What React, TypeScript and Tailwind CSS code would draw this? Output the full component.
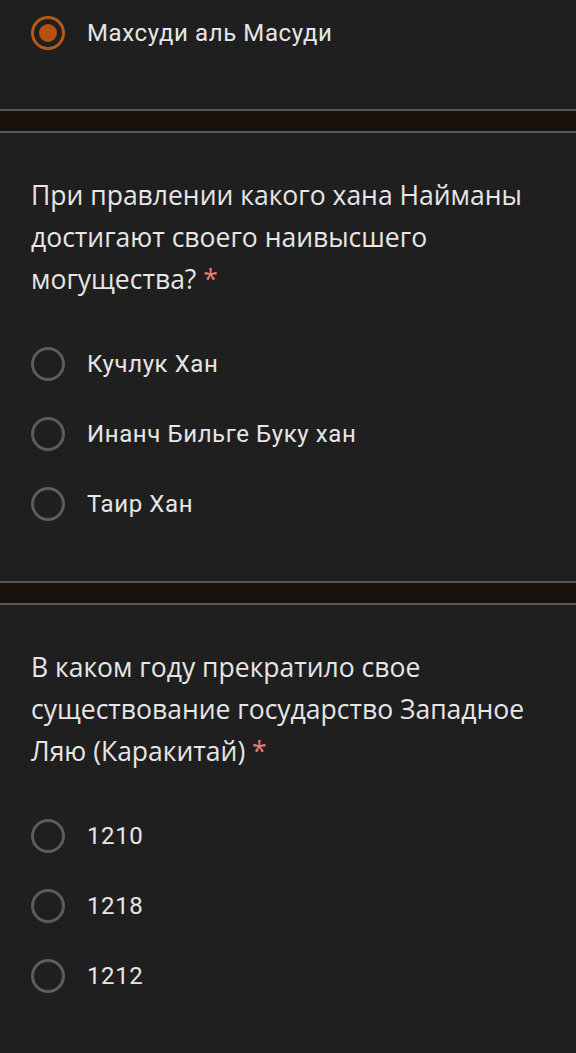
const questions = [
  {
    title: 'При правлении какого хана Найманы достигают своего наивысшего могущества?',
    options: ['Кучлук Хан', 'Инанч Бильге Буку хан', 'Таир Хан'],
  },
  {
    title: 'В каком году прекратило свое существование государство Западное Ляю (Каракитай)',
    options: ['1210', '1218', '1212'],
  },
]

function Radio({ checked }: { checked?: boolean }) {
  if (checked) {
    return (
      <span className="flex h-[34px] w-[34px] items-center justify-center rounded-full border-[3px] border-[#b3591a]">
        <span className="h-[18px] w-[18px] rounded-full bg-[#b5520f]" />
      </span>
    )
  }
  return <span className="h-[34px] w-[34px] rounded-full border-[3px] border-[#5c5c5c]" />
}

function Option({ label, checked }: { label: string; checked?: boolean }) {
  return (
    <div className="flex h-[70px] items-center gap-[22px] pl-[31px]">
      <Radio checked={checked} />
      <span className="text-[24px] tracking-[0.6px] text-[#e6e6e6]">{label}</span>
    </div>
  )
}

function Divider() {
  return <div className="h-[24px] border-y-2 border-[#5b5754] bg-[#19110c]" />
}

export default function App() {
  return (
    <div className="min-h-[1053px] bg-[#1f1f1f] font-['Roboto',sans-serif]">
      {/* previous question, already answered */}
      <div className="-mt-[2px] pb-[41px]">
        <Option label="Махсуди аль Масуди" checked />
      </div>

      {questions.map((q) => (
        <div key={q.title}>
          <Divider />
          <div className="pt-[41px] pb-[42px]">
            <h2 className="pl-[31px] pr-[20px] font-['Open_Sans',sans-serif] text-[26.5px] leading-[42px] text-[#e6e6e6]">
              {q.title} <span className="text-[#ee7b73]">*</span>
            </h2>
            <div className="mt-[29px]">
              {q.options.map((o) => (
                <Option key={o} label={o} />
              ))}
            </div>
          </div>
        </div>
      ))}
    </div>
  )
}
